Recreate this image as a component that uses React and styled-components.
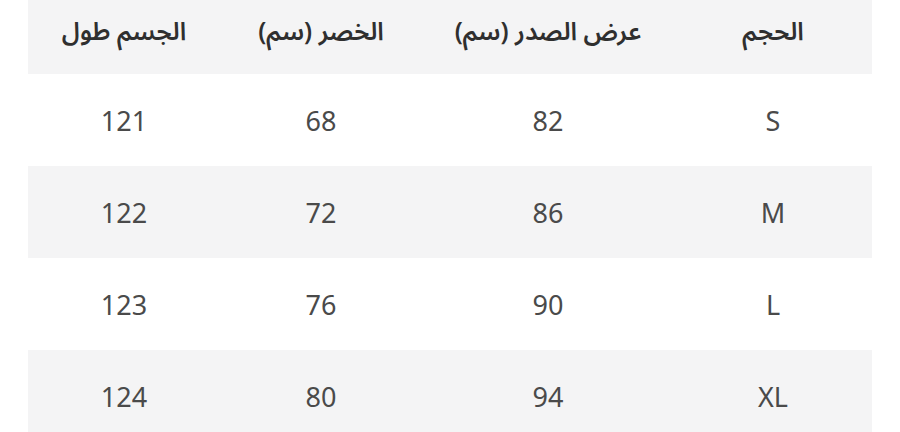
import React from "react";
import styled, { createGlobalStyle } from "styled-components";

const GlobalStyle = createGlobalStyle`
  html, body {
    margin: 0;
    padding: 0;
    background: #ffffff;
  }
  body {
    font-family: "Noto Sans", "Noto Sans Arabic", "DejaVu Sans", sans-serif;
  }
`;

const columns = ["الحجم", "عرض الصدر (سم)", "الخصر (سم)", "الجسم طول"];

const sizes = [
  ["S", "82", "68", "121"],
  ["M", "86", "72", "122"],
  ["L", "90", "76", "123"],
  ["XL", "94", "80", "124"],
];

const Page = styled.div`
  width: 900px;
  height: 432px;
  overflow: hidden;
  padding: 0 28px;
  box-sizing: border-box;
`;

const Table = styled.div`
  direction: rtl;
  display: flex;
  flex-direction: column;
`;

const Row = styled.div`
  display: grid;
  grid-template-columns: 198px 252px 202px 192px;
  height: ${(p) => (p.$head ? "74px" : "92px")};
  background: ${(p) => (p.$shade ? "#f4f4f5" : "#ffffff")};
  align-items: ${(p) => (p.$head ? "start" : "center")};
`;

const HeadCell = styled.div`
  text-align: center;
  padding-top: 6px;
  font-size: 25px;
  font-weight: 600;
  color: #2f2f2f;
`;

const Cell = styled.div`
  text-align: center;
  font-size: 27px;
  color: #4a4a4a;
  line-height: 1;
`;

export default function App() {
  return (
    <>
      <GlobalStyle />
      <Page>
        <Table>
          <Row $head $shade>
            {columns.map((c) => (
              <HeadCell key={c}>{c}</HeadCell>
            ))}
          </Row>
          {sizes.map((r, i) => (
            <Row key={r[0]} $shade={i % 2 === 1}>
              {r.map((v, j) => (
                <Cell key={j}>{v}</Cell>
              ))}
            </Row>
          ))}
        </Table>
      </Page>
    </>
  );
}
